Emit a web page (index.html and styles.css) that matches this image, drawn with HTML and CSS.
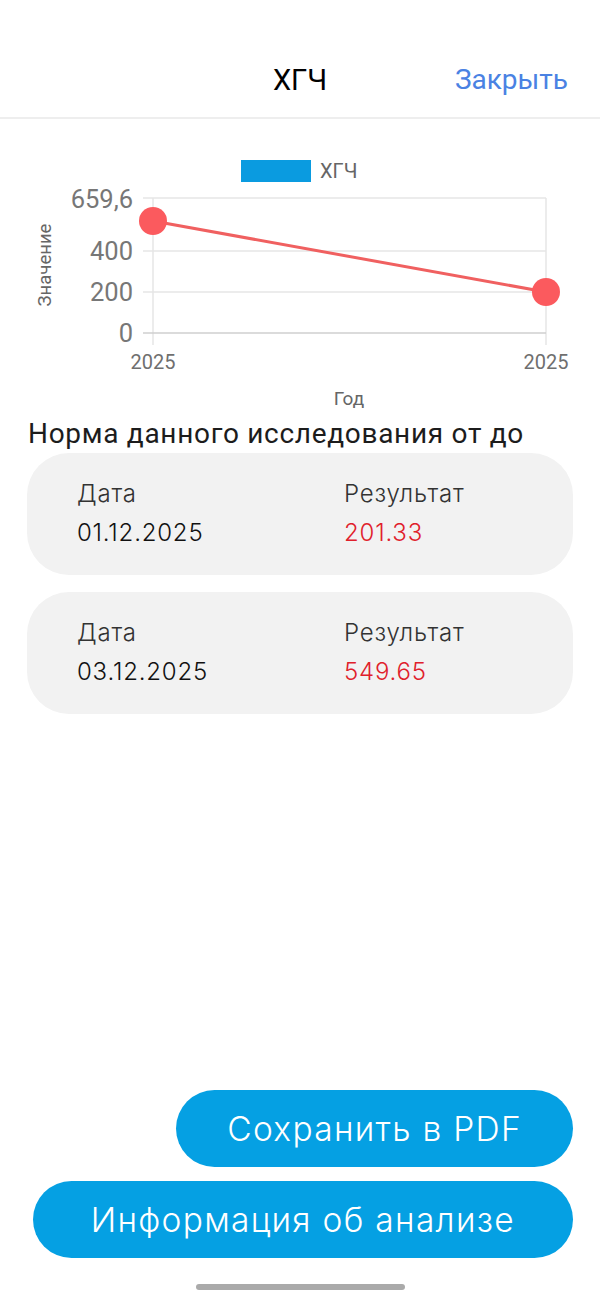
FILE: index.html
```html
<html>
<head>
    <title>ХГЧ</title>
    <link rel="stylesheet" href="styles.css">
</head>
<body>
    <div class="screen">
        <div class="header">
            <div></div>
            <div class="title">ХГЧ</div>
            <div class="close">Закрыть</div>
        </div>

        <svg class="chart" width="600" height="290" viewBox="0 0 600 290">
            <!-- legend -->
            <rect x="241" y="41" width="70" height="22" fill="#0a9be0"/>
            <text x="320" y="59" class="legend">ХГЧ</text>

            <!-- grid -->
            <g stroke="#e6e6e6" stroke-width="1.5">
                <line x1="143" y1="79" x2="546" y2="79"/>
                <line x1="143" y1="132" x2="546" y2="132"/>
                <line x1="143" y1="173" x2="546" y2="173"/>
                <line x1="153" y1="79" x2="153" y2="226"/>
                <line x1="546" y1="79" x2="546" y2="226"/>
            </g>
            <line x1="143" y1="214" x2="546" y2="214" stroke="#cfcfcf" stroke-width="1.5"/>

            <!-- y axis -->
            <g class="tick" text-anchor="end">
                <text x="133" y="89">659,6</text>
                <text x="133" y="141">400</text>
                <text x="133" y="182">200</text>
                <text x="133" y="223">0</text>
            </g>
            <text class="axis-title" text-anchor="middle" transform="translate(51 146) rotate(-90)">Значение</text>

            <!-- x axis -->
            <g class="tick-x" text-anchor="middle">
                <text x="153" y="250">2025</text>
                <text x="546" y="250">2025</text>
            </g>
            <text class="axis-title x" x="349" y="286" text-anchor="middle">Год</text>

            <!-- data -->
            <line x1="153" y1="102" x2="546" y2="173" stroke="#f06060" stroke-width="3"/>
            <circle cx="153" cy="102" r="14" fill="#fb5a5e"/>
            <circle cx="546" cy="173" r="14" fill="#fb5a5e"/>
        </svg>

        <div class="norm">Норма данного исследования от до</div>

        <div class="results">
            <div class="card">
                <div class="label">Дата</div>
                <div class="label">Результат</div>
                <div class="value">01.12.2025</div>
                <div class="value red">201.33</div>
            </div>
            <div class="card">
                <div class="label">Дата</div>
                <div class="label">Результат</div>
                <div class="value">03.12.2025</div>
                <div class="value red">549.65</div>
            </div>
        </div>

        <div class="actions">
            <button class="btn btn-pdf">Сохранить в PDF</button>
            <button class="btn btn-info">Информация об анализе</button>
        </div>

        <div class="home-bar"></div>
    </div>
</body>
</html>
```

FILE: styles.css
```css
body {
    margin: 0;
    padding: 0;
    background-color: #ffffff;
    font-family: Roboto, 'Noto Sans', sans-serif;
    color: #111;
}

.screen {
    height: 1299px;
    display: flex;
    flex-direction: column;
    overflow: hidden;
}

.header {
    height: 117px;
    border-bottom: 2px solid #eeeeee;
    display: grid;
    grid-template-columns: 1fr auto 1fr;
    align-items: start;
    padding: 0 32px;
}

.title {
    margin-top: 63px;
    font-size: 29px;
    color: #000;
}

.close {
    margin-top: 63px;
    justify-self: end;
    font-size: 28px;
    color: #4a82e3;
}

.chart {
    display: block;
    font-family: Roboto, sans-serif;
}

.legend {
    font-size: 20px;
    fill: #666;
}

.tick {
    font-size: 25.5px;
    fill: #777;
}

.tick-x {
    font-size: 20px;
    fill: #6f6f6f;
}

.axis-title {
    font-size: 18.5px;
    fill: #666;
}

.axis-title.x {
    font-size: 19px;
}

.norm {
    margin: 8px 0 0 28px;
    font-size: 28px;
    letter-spacing: 0.7px;
    color: #1c1c1c;
}

.results {
    display: flex;
    flex-direction: column;
    gap: 17px;
    padding: 3px 27px 0;
}

.card {
    background-color: #f2f2f2;
    border-radius: 42px;
    height: 122px;
    box-sizing: border-box;
    padding: 26px 50px 0;
    display: grid;
    grid-template-columns: 267px 1fr;
    align-content: start;
    row-gap: 9px;
    font-family: Inter, 'Open Sans', sans-serif;
    font-weight: 300;
    font-size: 24px;
    line-height: 30px;
    letter-spacing: 0.8px;
}

.label {
    color: #333;
}

.value {
    color: #111;
}

.value.red {
    color: #e0202b;
}

.actions {
    margin-top: auto;
    display: flex;
    flex-direction: column;
    align-items: flex-end;
    gap: 14px;
    padding: 0 27px;
}

.btn {
    background-color: #05a0e3;
    color: #ffffff;
    border: none;
    border-radius: 40px;
    height: 77px;
    padding: 0 53px;
    font-family: Inter, 'Open Sans', sans-serif;
    font-weight: 300;
    font-size: 33.5px;
    letter-spacing: 1.3px;
    cursor: pointer;
}

.btn-pdf {
    padding: 0 51px;
}

.btn-info {
    padding: 0 58px;
}

.home-bar {
    width: 209px;
    height: 6px;
    border-radius: 3px;
    background-color: #aaaaaa;
    margin: 26px auto 9px;
}
```
